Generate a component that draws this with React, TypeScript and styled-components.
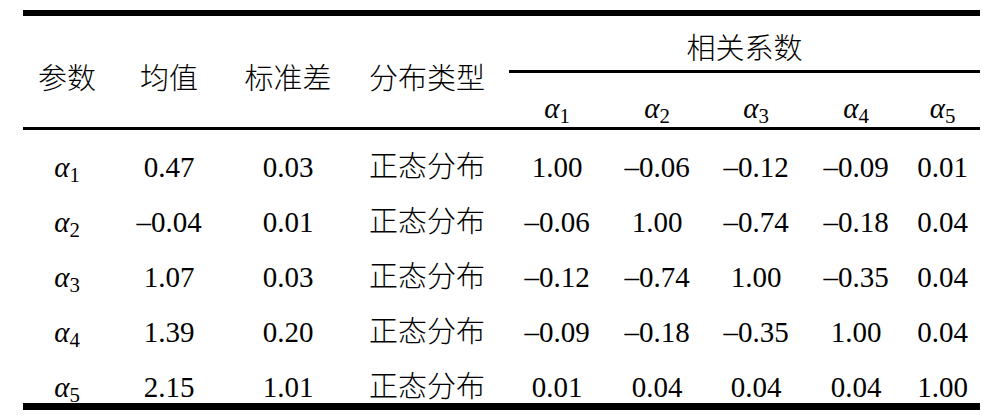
import React from 'react';
import styled, { createGlobalStyle } from 'styled-components';

const serif = `'Liberation Serif', 'Noto Sans CJK SC', serif`;

const GlobalStyle = createGlobalStyle`
  html, body {
    margin: 0;
    padding: 0;
    background: #fff;
  }
  body {
    font-family: ${serif};
    color: #000;
  }
`;

const colWidths = [88, 116, 122, 156, 104, 96, 102, 98, 75];

const rows = [
  { n: 1, mean: '0.47', std: '0.03', corr: ['1.00', '–0.06', '–0.12', '–0.09', '0.01'] },
  { n: 2, mean: '–0.04', std: '0.01', corr: ['–0.06', '1.00', '–0.74', '–0.18', '0.04'] },
  { n: 3, mean: '1.07', std: '0.03', corr: ['–0.12', '–0.74', '1.00', '–0.35', '0.04'] },
  { n: 4, mean: '1.39', std: '0.20', corr: ['–0.09', '–0.18', '–0.35', '1.00', '0.04'] },
  { n: 5, mean: '2.15', std: '1.01', corr: ['0.01', '0.04', '0.04', '0.04', '1.00'] },
];

const Alpha = ({ n }: { n: number }) => (
  <>
    <Greek>α</Greek>
    <Sub>{n}</Sub>
  </>
);

const App = () => {
  return (
    <Page>
      <GlobalStyle />
      <Table>
        <colgroup>
          {colWidths.map((w, i) => (
            <col key={i} style={{ width: w }} />
          ))}
        </colgroup>
        <thead>
          <tr>
            <SpanHead rowSpan={2}>参数</SpanHead>
            <SpanHead rowSpan={2}>均值</SpanHead>
            <SpanHead rowSpan={2}>标准差</SpanHead>
            <SpanHead rowSpan={2}>分布类型</SpanHead>
            <GroupHead colSpan={5}>
              <GroupLabel>相关系数</GroupLabel>
            </GroupHead>
          </tr>
          <tr>
            {[1, 2, 3, 4, 5].map((n) => (
              <SubHead key={n}>
                <Alpha n={n} />
              </SubHead>
            ))}
          </tr>
        </thead>
        <tbody>
          {rows.map((r) => (
            <tr key={r.n}>
              <Cell>
                <Alpha n={r.n} />
              </Cell>
              <Cell>{r.mean}</Cell>
              <Cell>{r.std}</Cell>
              <Cell $cjk>正态分布</Cell>
              {r.corr.map((v, i) => (
                <Cell key={i}>{v}</Cell>
              ))}
            </tr>
          ))}
        </tbody>
      </Table>
    </Page>
  );
};

const Page = styled.div`
  padding: 10px 0 0 23px;
  width: 999px;
  height: 416px;
  box-sizing: border-box;
  overflow: hidden;
`;

const Table = styled.table`
  table-layout: fixed;
  width: 957px;
  border-collapse: separate;
  border-spacing: 0;
  font-family: ${serif};
  font-size: 29px;
  line-height: 32px;
  th,
  td {
    padding: 0;
    text-align: center;
    font-weight: normal;
    white-space: nowrap;
  }
`;

const SpanHead = styled.th`
  border-top: 6px solid #000;
  border-bottom: 3.5px solid #000;
  padding-top: 14px !important;
  vertical-align: middle;
  font-weight: 300 !important;
`;

const GroupHead = styled.th`
  border-top: 6px solid #000;
  padding-top: 17px !important;
  vertical-align: top;
  font-weight: 300 !important;
`;

const GroupLabel = styled.div`
  margin-left: 4px;
  padding-bottom: 5px;
  border-bottom: 3px solid #000;
`;

const SubHead = styled.th`
  padding-top: 19px !important;
  padding-bottom: 3px !important;
  border-bottom: 3.5px solid #000;
`;

const Cell = styled.td<{ $cjk?: boolean }>`
  padding-top: 23px !important;
  font-weight: ${(p) => (p.$cjk ? 300 : 'normal')} !important;
  tr:first-child > & {
    padding-top: 21px !important;
  }
  tr:last-child > & {
    border-bottom: 7px solid #000;
  }
`;

const Greek = styled.i`
  font-style: italic;
`;

const Sub = styled.sub`
  font-size: 0.72em;
  vertical-align: -0.24em;
  line-height: 0;
  font-style: normal;
`;

export default App;
